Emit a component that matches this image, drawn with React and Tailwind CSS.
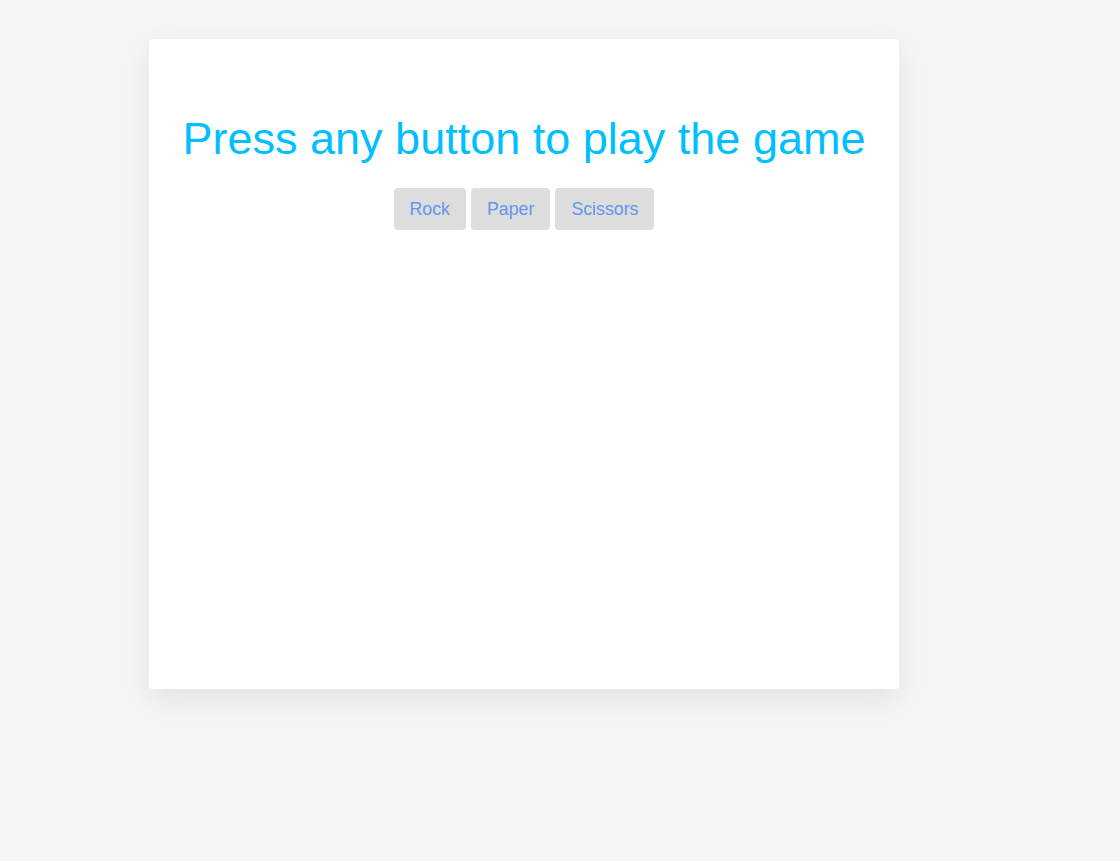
export default function App() {
  return (
    <div className="min-h-[861px] w-full bg-[#f5f5f5] pt-[39px] pl-[149px]" style={{ fontFamily: '"Liberation Sans", Arial, sans-serif' }}>
      <div className="w-[750px] h-[650px] bg-white rounded-[4px] shadow-[0_10px_30px_rgba(0,0,0,0.08)] flex flex-col items-center pt-[74px]">
        <h1 className="text-[45px] leading-[52px] text-[#00bfff] font-normal">Press any button to play the game</h1>
        <div className="mt-[23px] flex gap-[5px]">
          {["Rock", "Paper", "Scissors"].map((b) => (
            <button key={b} className="h-[42px] px-[16px] bg-[#dddddd] rounded-[4px] text-[17.75px] text-[#6495ed]">
              {b}
            </button>
          ))}
        </div>
      </div>
    </div>
  );
}
